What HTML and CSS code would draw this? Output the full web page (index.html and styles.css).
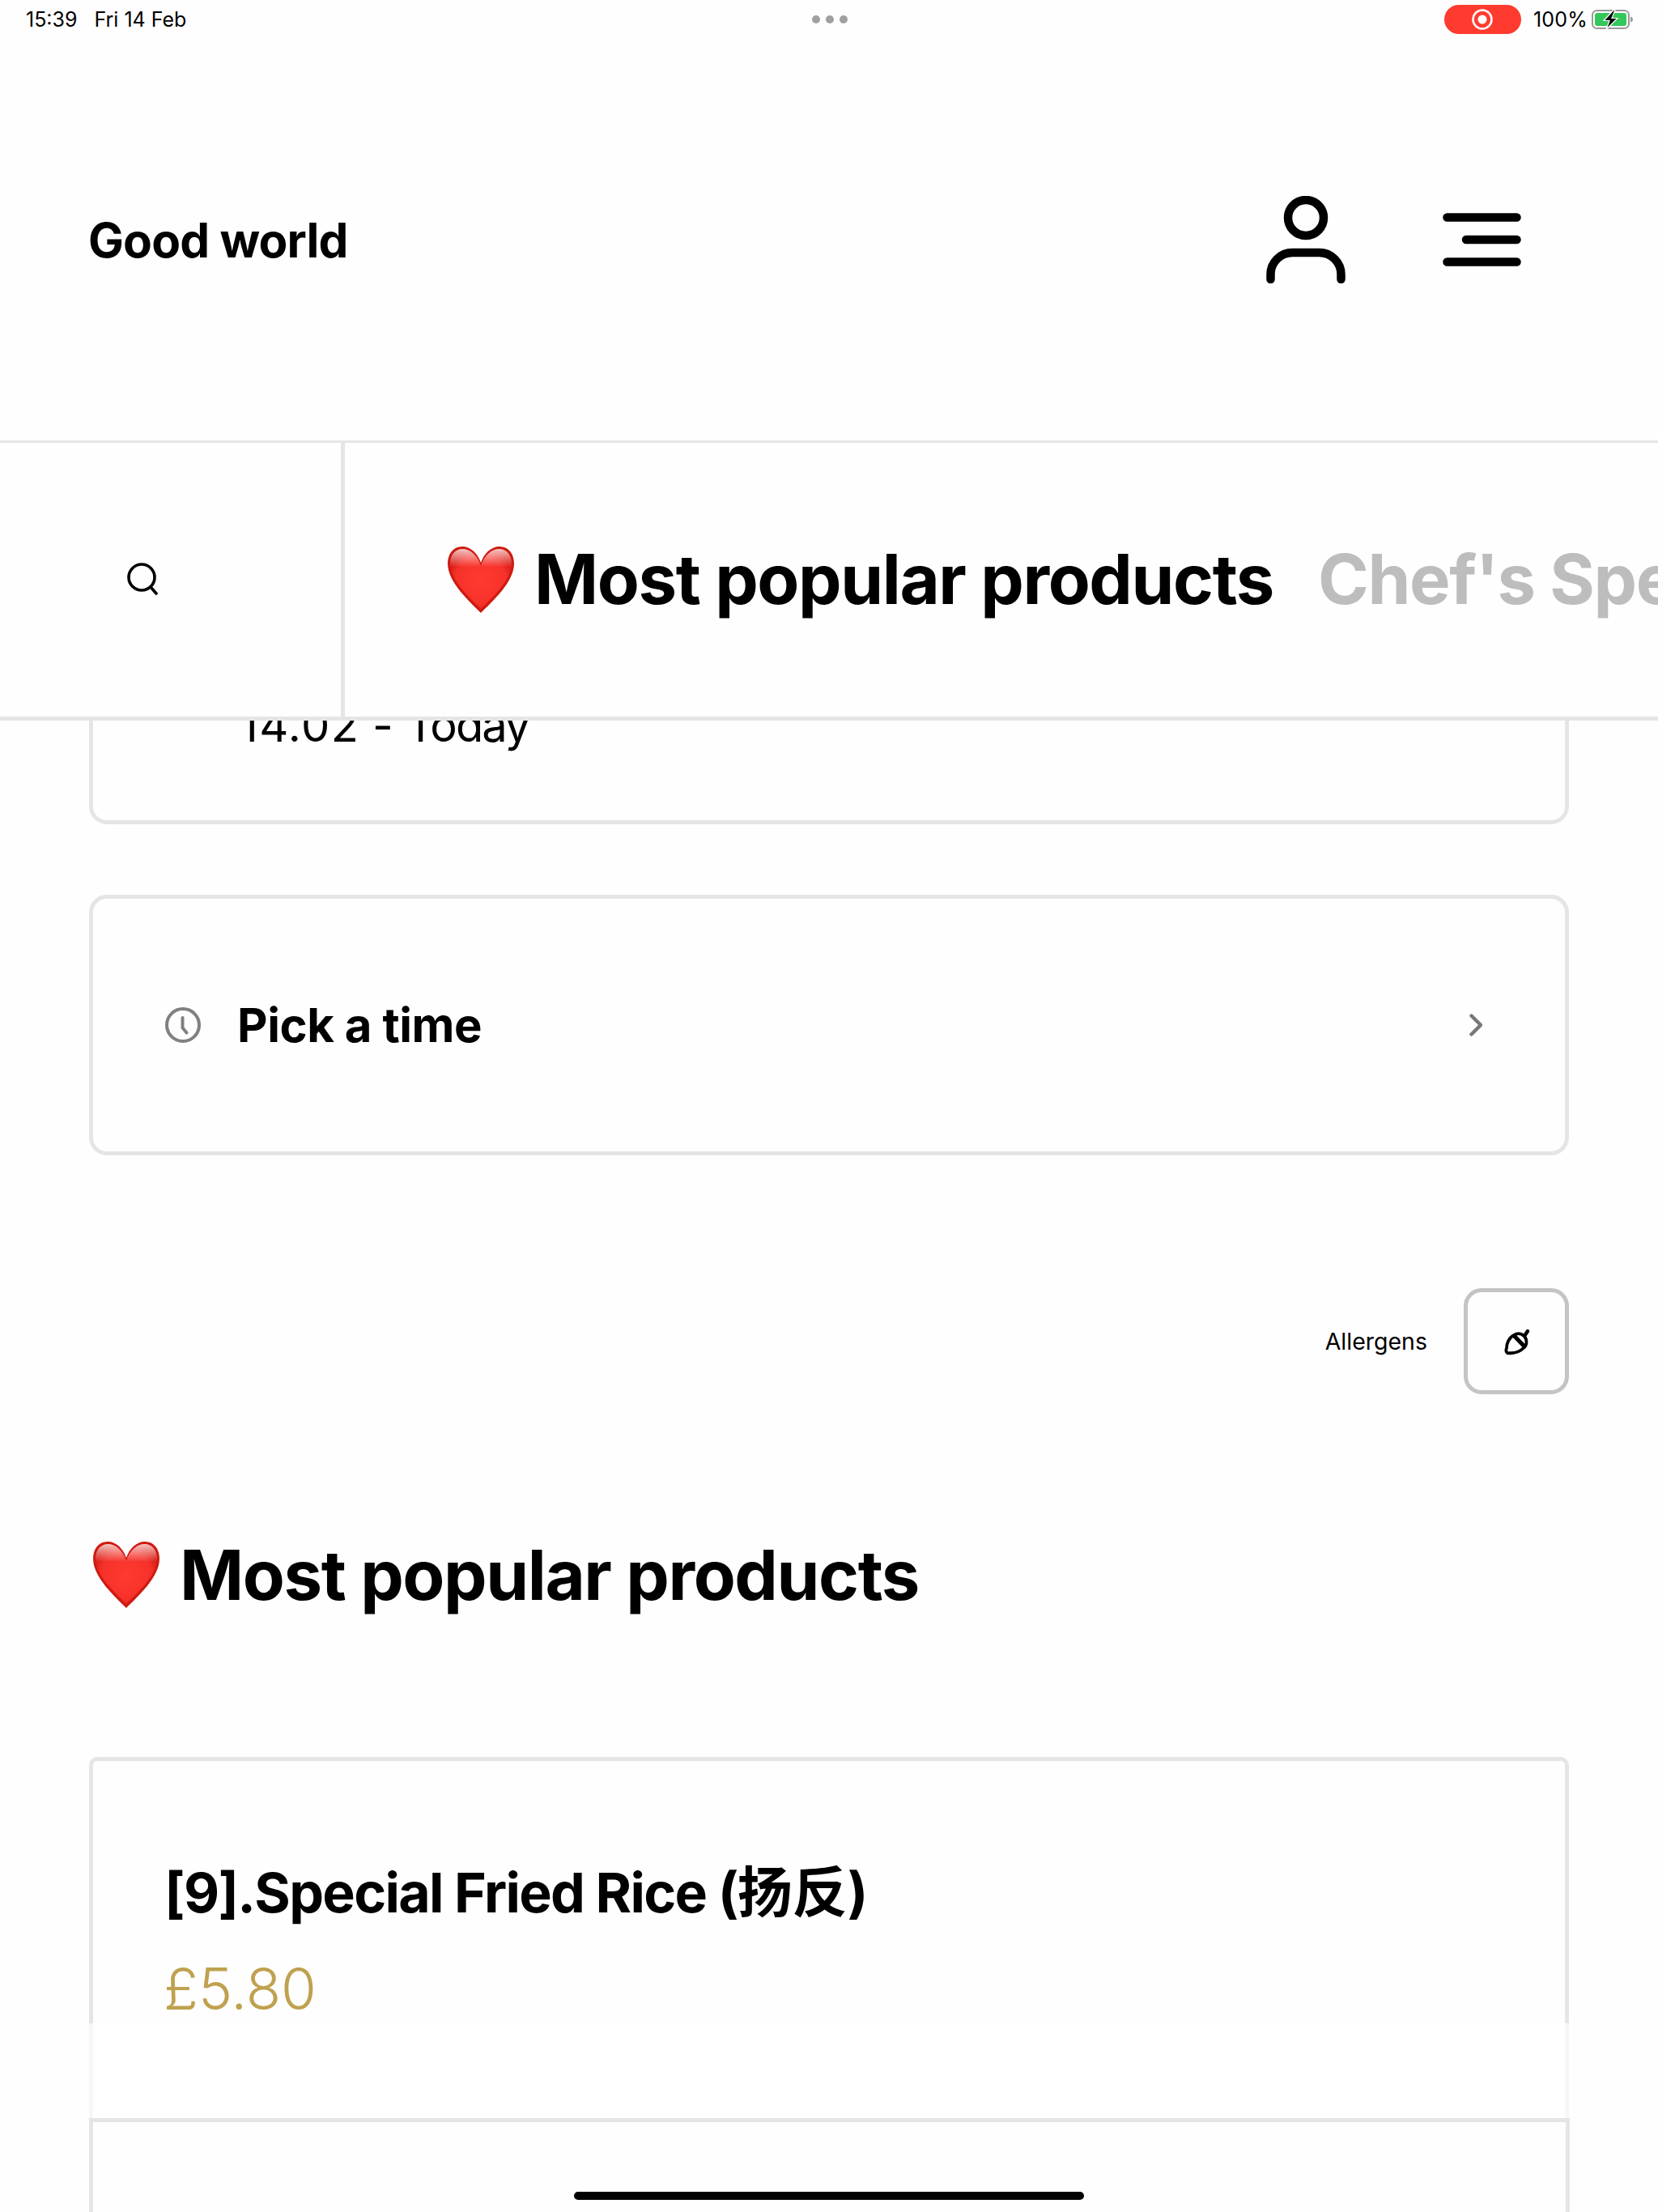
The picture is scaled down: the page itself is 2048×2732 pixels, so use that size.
FILE: index.html
```html
<!DOCTYPE html>
<html lang="en">
<head>
<meta charset="utf-8">
<title>Good world</title>
<link rel="stylesheet" href="styles.css">
</head>
<body>
<svg class="defs" width="0" height="0" aria-hidden="true">
  <defs>
    <radialGradient id="heartFill" cx="50%" cy="52%" r="58%">
      <stop offset="0" stop-color="#ff3b30"/>
      <stop offset="0.7" stop-color="#f5312a"/>
      <stop offset="1" stop-color="#d3170f"/>
    </radialGradient>
    <linearGradient id="heartShine" x1="0" y1="0" x2="0" y2="1">
      <stop offset="0" stop-color="#fff" stop-opacity="0.75"/>
      <stop offset="0.3" stop-color="#fff" stop-opacity="0"/>
    </linearGradient>
    <symbol id="heart" viewBox="0 0 82 82">
      <path fill="#cf1a10" d="M41 20C37 8 28 0 18 0 7 0 0 9 0 21c0 23 27 47 41 61 14-14 41-38 41-61C82 9 75 0 64 0 54 0 45 8 41 20Z"/>
      <path fill="url(#heartFill)" d="M41 24C37 11 28 3 18.500 3 9 3 3 11 3 21c0 21 25 43 38 56 13-13 38-35 38-56C79 11 73 3 63.500 3 54 3 45 11 41 24Z"/>
      <path fill="url(#heartShine)" d="M41 24C37 11 28 3 18.500 3 9 3 3 11 3 21c0 21 25 43 38 56 13-13 38-35 38-56C79 11 73 3 63.500 3 54 3 45 11 41 24Z"/>
    </symbol>
  </defs>
</svg>

<div class="page">
  <div class="status">
    <div class="status-left"><span>15:39</span><span>Fri 14 Feb</span></div>
    <div class="status-dots"><i></i><i></i><i></i></div>
    <div class="status-right">
      <div class="rec">
        <svg width="30" height="30" viewBox="0 0 30 30"><circle cx="15" cy="15" r="11.500" fill="none" stroke="#fff" stroke-width="2.500"/><circle cx="15" cy="15" r="5.500" fill="#fff"/></svg>
      </div>
      <span class="pct">100%</span>
      <svg class="battery" width="52" height="25" viewBox="0 0 52 25">
        <rect x="1" y="1" width="45" height="22" rx="5.500" fill="none" stroke="#9a9a9a" stroke-width="2"/>
        <rect x="4" y="4" width="39" height="16" rx="3" fill="#34c759"/>
        <path d="M48 8.500c2 .5 3 2 3 3.500s-1 3-3 3.500Z" fill="#9a9a9a"/>
        <path d="M27 .5 15 13.500h7L18 24.500 32 10.500h-7l4-10Z" fill="#000" stroke="#fff" stroke-width="1.200"/>
      </svg>
    </div>
  </div>

  <header class="header">
    <div class="brand">Good world</div>
    <div class="header-icons">
      <svg class="ico-user" width="98" height="108" viewBox="0 0 98 108" fill="none" stroke="#000" stroke-width="10.500" stroke-linecap="round">
        <circle cx="49" cy="27" r="22"/>
        <path d="M5.500 103v-6a27 27 0 0 1 27-27h33a27 27 0 0 1 27 27v6"/>
      </svg>
      <svg class="ico-menu" width="97" height="66" viewBox="0 0 97 66" fill="none" stroke="#000" stroke-width="10.500" stroke-linecap="round">
        <path d="M5.500 5.500h86M29 33h62.500M5.500 60.500h86"/>
      </svg>
    </div>
  </header>

  <nav class="tabs">
    <div class="tab-search">
      <svg width="40" height="40" viewBox="0 0 40 40" fill="none" stroke="#000" stroke-width="3.600" stroke-linecap="round">
        <circle cx="19" cy="18" r="16"/>
        <path d="M30 30l7 8"/>
      </svg>
    </div>
    <div class="tab-list">
      <div class="tab tab-active"><svg class="heart" width="82" height="82"><use href="#heart"/></svg><span>Most popular products</span></div>
      <div class="tab">Chef's Specials</div>
    </div>
  </nav>

  <main class="main">
    <div class="panel panel-date">
      <span class="date-text"><span class="date-num">14.02</span> - <span class="date-word">Today</span></span>
    </div>

    <div class="panel panel-time">
      <svg class="clock" width="44" height="44" viewBox="0 0 44 44" fill="none" stroke="#808080" stroke-width="4" stroke-linecap="round" stroke-linejoin="round">
        <circle cx="22" cy="22" r="20"/>
        <path d="M21.500 13v12.500l5 6"/>
      </svg>
      <span class="time-text">Pick a time</span>
      <svg class="chevron" width="16" height="28" viewBox="0 0 16 28" fill="none" stroke="#777" stroke-width="4.400" stroke-linecap="round" stroke-linejoin="round">
        <path d="M2.500 2.500 14 14 2.500 25.500"/>
      </svg>
    </div>

    <div class="allergens">
      <span class="allergens-label">Allergens</span>
      <div class="allergens-btn">
        <svg class="acorn" width="50" height="50" viewBox="0 0 50 50" fill="none" stroke="#000" stroke-width="3.800" stroke-linecap="round" stroke-linejoin="round">
          <path d="M20 17C26 13 33 16 35 22c1 4 0 8-2 10-5 5-13 8-21 7-2-1-2-4-1-6 0-6 3-13 9-16Z"/>
          <path d="M20.500 18 33 31" stroke-width="5"/>
          <path d="M33 18l4-6" stroke-width="4.500"/>
        </svg>
      </div>
    </div>

    <h2 class="section-title"><svg class="heart" width="82" height="82"><use href="#heart"/></svg><span>Most popular products</span></h2>

    <article class="product">
      <h3 class="product-name">[9].Special Fried Rice (<span class="cjk">扬反</span>)</h3>
      <div class="product-price">£5.80</div>
      <div class="product-fade"></div>
    </article>
    <article class="product product-next"></article>
  </main>

  <div class="home-bar"></div>
</div>
</body>
</html>
```

FILE: styles.css
```css
* { box-sizing: border-box; }
html, body { margin: 0; padding: 0; background: #fefefe; }
body { font-family: Inter, "Noto Sans CJK SC", "Liberation Sans", sans-serif; color: #000; }
.defs { position: absolute; }
.page { position: relative; width: 2048px; height: 2732px; overflow: hidden; }

.status { height: 48px; padding: 0 30px 0 32px; display: grid; grid-template-columns: 1fr auto 1fr; align-items: center; font-size: 25px; line-height: 30px; }
.status-left { display: flex; gap: 21px; }
.status-dots { display: flex; gap: 7px; }
.status-dots i { width: 10px; height: 10px; border-radius: 50%; background: #a0a0a0; }
.status-right { display: flex; justify-content: flex-end; align-items: center; }
.rec { width: 95px; height: 36px; border-radius: 18px; background: #ff3b30; display: flex; align-items: center; justify-content: center; }
.pct { margin-left: 15px; letter-spacing: 0.2px; }
.battery { margin-left: 5px; }

.header { height: 496px; padding: 0 169px 0 109px; display: flex; align-items: center; justify-content: space-between; }
.brand { font-size: 58.500px; font-weight: 700; letter-spacing: -0.8px; line-height: 70px; margin-top: 2px; }
.header-icons { display: flex; align-items: center; gap: 120px; }
.ico-user, .ico-menu { display: block; }

.tabs { position: relative; z-index: 2; height: 346px; background: #fefefe; border-top: 3px solid #e5e5e5; border-bottom: 5px solid #e5e5e5; display: flex; }
.tab-search { width: 426px; flex: none; border-right: 5px solid #e5e5e5; padding: 0 0 3px 156px; display: flex; align-items: center; }
.tab-list { flex: 1; min-width: 0; overflow: hidden; padding-left: 127px; display: flex; align-items: center; gap: 55px; white-space: nowrap; font-size: 85px; font-weight: 700; letter-spacing: -1.400px; line-height: 100px; color: #bdbdbd; }
.tab { display: flex; align-items: center; flex: none; }
.tab-active { color: #000; gap: 25px; }
.heart { display: block; flex: none; }

.main { padding: 0 110px; }
.panel { width: 1828px; border: 5px solid #e5e5e5; border-radius: 22px; background: #fefefe; display: flex; }
.panel-date { height: 320px; margin-top: -192px; align-items: flex-end; padding: 0 0 83px 181px; }
.date-text { font-size: 56px; line-height: 68px; }
.date-num { letter-spacing: 1.400px; }
.date-word { letter-spacing: -2px; }
.panel-time { height: 322px; margin-top: 87px; align-items: center; padding: 0 102px 0 89px; }
.clock { flex: none; }
.time-text { flex: 1; margin-left: 45px; font-size: 58px; font-weight: 700; letter-spacing: -0.4px; line-height: 70px; }
.chevron { flex: none; }

.allergens { height: 131px; margin-top: 164px; display: flex; justify-content: flex-end; align-items: center; gap: 45px; }
.allergens-label { font-size: 28.500px; line-height: 36px; }
.allergens-btn { width: 130px; height: 131px; border: 5px solid #c4c4c4; border-radius: 22px; display: flex; align-items: center; justify-content: center; padding-left: 4px; }

.section-title { margin: 182px 0 0 5px; display: flex; align-items: center; gap: 25px; height: 82px; font-size: 85px; font-weight: 700; letter-spacing: -1.400px; }

.product { position: relative; width: 1828px; height: 446px; margin-top: 184px; border: solid #e5e5e5; border-width: 5px 5px 0; border-radius: 10px 10px 0 0; padding: 122px 0 0 88px; }
.product-name { margin: 0; font-size: 68px; font-weight: 700; letter-spacing: -1.700px; line-height: 80px; }
.cjk { letter-spacing: 0; }
.product-price { margin-top: 37px; margin-left: -1px; font-size: 71px; font-weight: 300; line-height: 84px; color: #bfa14f; }
.product-fade { position: absolute; left: -5px; right: -5px; top: 324px; bottom: 0; background: rgba(255, 255, 255, 0.7); }
.product-next { width: 1829px; height: 200px; margin-top: 0; border-radius: 0; padding: 0; }

.home-bar { position: absolute; left: 709px; bottom: 15px; width: 630px; height: 10px; border-radius: 5px; background: #000; z-index: 3; }
```
